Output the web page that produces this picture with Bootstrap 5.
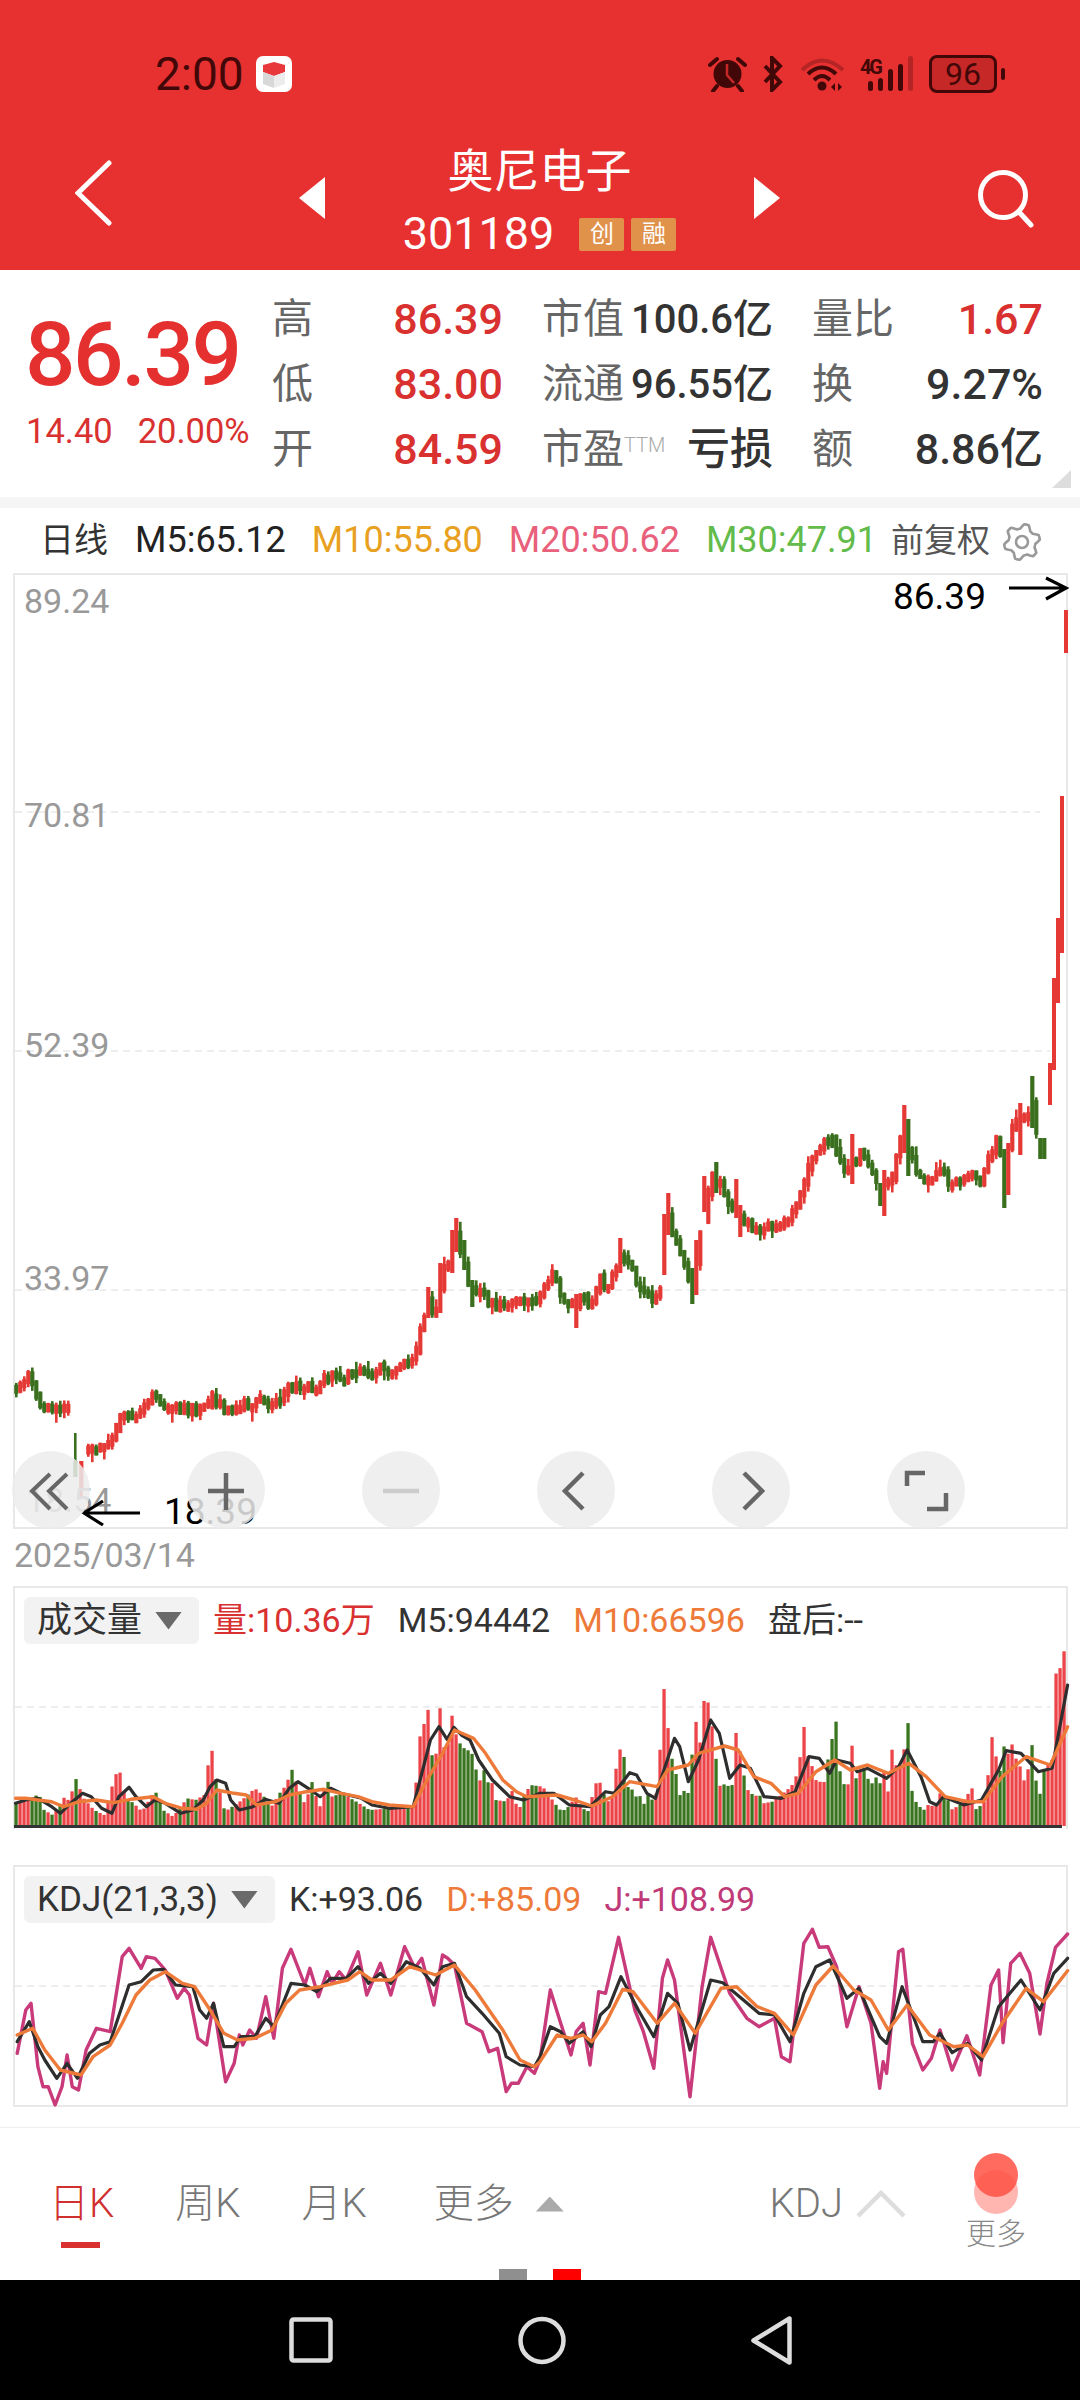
<!DOCTYPE html>
<html lang="zh">
<head>
<meta charset="utf-8">
<title>奥尼电子</title>
<link href="https://cdn.jsdelivr.net/npm/bootstrap@5.3.0/dist/css/bootstrap.min.css" rel="stylesheet">
<style>
html,body{margin:0;background:#fff}
body{width:1080px;height:2400px;overflow:hidden;font-family:Roboto,"Noto Sans CJK SC",sans-serif;color:#333}
.hdr{background:#e73131;height:270px;color:#fff}
.stat{height:40px;position:relative;top:54px;padding-left:155px;padding-right:75px;color:#420808}
.stat-time{font-size:46px;line-height:40px}
.stat svg{display:block}
.appicon{margin-left:12px}
.batt{width:68px;height:38px;margin-left:16px;border:3px solid #420808;border-radius:8px;background:#c62828;font-size:32px;line-height:32px;text-align:center;color:#420808}
.nub{width:4px;height:12px;margin-left:4px;border-radius:2px;background:#420808}
.navrow{padding-top:107px;height:257px;padding-left:75px}
.ttl{width:429px;line-height:1;text-align:center}
.ttl-name{font-size:46px;line-height:48px;height:48px}
.ttl-code{font-size:45px;line-height:46px;margin-top:16px}
.tag{width:45px;height:33px;background:#e0914a;font-size:24px;line-height:33px;border-radius:2px;text-align:center;color:#fff}
.quote{height:227px;padding:16px 0 0 25px;position:relative}
.q-left{width:247px;padding-top:24px}
.big{font-size:89px;line-height:90px;font-weight:500;color:#e53030;letter-spacing:-2.5px}
.sub{font-size:34.5px;line-height:40px;color:#d93030;margin-top:11px;gap:25px;padding-left:1px}
.q-grid{display:grid;grid-template-columns:repeat(3,231px);grid-auto-rows:65px;column-gap:39px;padding-top:1px}
.q-cell{line-height:65px}
.q-l{font-size:41px;color:#666}
.q-v{font-size:43px;font-weight:500;color:#333}
.q-w{font-size:40px}
.q-r{font-size:43px;font-weight:500;color:#d93030}
.ttm{font-size:20px;color:#aaa;position:relative;top:-11px;font-weight:300}
.q-corner{position:absolute;left:1052px;top:200px;width:19px;height:18px;background:#ddd;clip-path:polygon(100% 0,100% 100%,0 100%)}
.band{height:11px;background:#f5f5f5}
.maline{height:65px;padding-left:40px;font-size:36px;line-height:65px}
.c-o{color:#e8a020}.c-p{color:#e8607a}.c-g{color:#63bb4b}
.box{margin-left:13px;width:1055px;border:2px solid #e8e8e8;position:relative}
.box svg{display:block;overflow:visible}
.mainbox{height:956px}
.ctrls{position:absolute;left:-3px;top:876px;gap:97px}
.ctrl{width:78px;height:78px;padding:0;border:0;border-radius:50%;background:rgba(236,236,236,.85)}
.ctrl svg{display:block}
.daterow{height:57px;padding-left:14px;font-size:34px;line-height:52px;color:#999;position:relative}
.fade{position:absolute;left:890px;top:0;width:177px;height:36px;background:linear-gradient(#f1f1f1,#fff)}
.volbox{height:243px;border-bottom:0}
.kdjbox{height:242px;margin-top:36px}
.lg{padding:9px 0 0 9px;height:62px;font-size:34px;gap:23px;line-height:47px}
.kdjbox .lg{height:56px}
.pill{background:#f2f2f2;border-radius:6px;height:47px;padding:0 17px 0 13px;gap:13px;margin-right:-9px;font-size:35px;color:#333}
.tri{width:27px;height:18px;background:#6a6a6a;clip-path:polygon(0 0,100% 0,50% 100%)}
.c-r{color:#d93030}.c-a{color:#ee7a3a}.c-j{color:#c03a78}
.tabs{margin-top:20px;border-top:1px solid #eee;height:142px;padding:25px 54px 0 49px;gap:61px;color:#777;font-size:40px;font-weight:300}
.tab{margin-top:31px;line-height:40px}
.tab-on{color:#d03030}
.ubar{width:39px;height:6px;background:#d93030;margin:18px 0 0 12px}
.uptri{width:28px;height:15px;background:#aaa;clip-path:polygon(50% 0,100% 100%,0 100%);margin-left:22px}
.dotcol{width:60px;font-size:30px;line-height:30px;color:#888;text-align:center}
.dot1,.dot2{width:44px;height:44px;border-radius:50%;margin:0 auto}
.dot1{background:#ff6b5f}
.dot2{background:rgba(255,80,70,.42);margin-top:-27px}
.dotname{margin-top:5px}
.pager{height:11px;gap:26px}
.pager i{display:block;width:28px;height:11px;background:#8f8f8f}
.pager i+i{background:#f00}
.sysnav{height:120px;background:#000}
</style>
</head>
<body>
<div class="hdr">
  <div class="stat d-flex align-items-center">
    <span class="stat-time">2:00</span>
    <svg class="appicon" width="36" height="36" viewBox="0 0 36 36"><rect width="36" height="36" rx="7" fill="#fff"/><path d="M7 9l11-3 11 3v7l-11 4-11-4z" fill="#e8383c"/><path d="M7 16l11 4v12l-11-4z" fill="#d8d8d8"/><path d="M29 16l-11 4v12l11-4z" fill="#ececec"/></svg>
    <div class="ms-auto d-flex align-items-center">
      <svg width="39" height="36" viewBox="0 0 39 36"><circle cx="19.5" cy="18" r="14" fill="#420808"/><path d="M19 8v11l7 8" stroke="#c62828" stroke-width="2.5" fill="none"/><path d="M2 9l7-6M30 3l7 6M9 30l-4 5M30 30l4 5" stroke="#420808" stroke-width="4" stroke-linecap="round"/></svg>
      <svg style="margin-left:15px" width="21" height="36" viewBox="0 0 21 36"><path d="M3 10l15 16-8 8V2l8 8L3 26" stroke="#420808" stroke-width="4" fill="none"/></svg>
      <svg style="margin-left:17px" width="45" height="36" viewBox="0 0 45 36"><path d="M2 14Q22-5 43 14" stroke="#b52525" stroke-width="4" fill="none"/><path d="M8 18Q22 5 36 18M14 24Q22 16 30 24" stroke="#420808" stroke-width="4" fill="none"/><circle cx="22" cy="30" r="4.5" fill="#420808"/><path d="M31 31l4-4v8zM42 31l-4-4v8z" fill="#420808"/></svg>
      <svg style="margin-left:15px" width="53" height="36" viewBox="0 0 53 36"><text x="0" y="18" font-size="20" font-weight="700" fill="#420808" font-family="Roboto,sans-serif" textLength="23">4G</text><g fill="#420808"><rect x="8" y="25" width="5" height="10" rx="2.5"/><rect x="18" y="22" width="5" height="13" rx="2.5"/><rect x="28" y="13" width="5" height="22" rx="2.5"/><rect x="38" y="8" width="5" height="27" rx="2.5"/></g><rect x="48" y="0" width="5" height="35" rx="2.5" fill="#b52525"/></svg>
      <div class="batt">96</div><div class="nub"></div>
    </div>
  </div>
  <div class="navrow d-flex align-items-start">
    <svg style="margin-top:13px" width="40" height="66" viewBox="0 0 40 66"><path d="M34 3L3 33l31 30" stroke="#fff" stroke-width="5" fill="none" stroke-linecap="round"/></svg>
    <svg style="margin:30px 0 0 184px" width="26" height="42" viewBox="0 0 26 42"><path d="M26 0v42L0 21z" fill="#fff"/></svg>
    <div class="ttl">
      <div class="ttl-name">奥尼电子</div>
      <div class="ttl-code d-flex justify-content-center align-items-center"><span>301189</span><span class="tag" style="margin-left:25px">创</span><span class="tag" style="margin-left:7px">融</span></div>
    </div>
    <svg style="margin-top:30px" width="26" height="42" viewBox="0 0 26 42"><path d="M0 0v42l26-21z" fill="#fff"/></svg>
    <svg style="margin:23px 0 0 198px" width="56" height="58" viewBox="0 0 56 58"><circle cx="25" cy="25" r="22.5" stroke="#fff" stroke-width="5" fill="none"/><path d="M41 42l12 13" stroke="#fff" stroke-width="5" stroke-linecap="round"/></svg>
  </div>
</div>

<div class="quote d-flex">
  <div class="q-left">
    <div class="big">86.39</div>
    <div class="sub d-flex"><span>14.40</span><span>20.00%</span></div>
  </div>
  <div class="q-grid">
    <div class="q-cell d-flex justify-content-between"><span class="q-l">高</span><span class="q-r">86.39</span></div>
    <div class="q-cell d-flex justify-content-between"><span class="q-l">市值</span><span class="q-v q-w">100.6亿</span></div>
    <div class="q-cell d-flex justify-content-between"><span class="q-l">量比</span><span class="q-r">1.67</span></div>
    <div class="q-cell d-flex justify-content-between"><span class="q-l">低</span><span class="q-r">83.00</span></div>
    <div class="q-cell d-flex justify-content-between"><span class="q-l">流通</span><span class="q-v q-w">96.55亿</span></div>
    <div class="q-cell d-flex justify-content-between"><span class="q-l">换</span><span class="q-v">9.27%</span></div>
    <div class="q-cell d-flex justify-content-between"><span class="q-l">开</span><span class="q-r">84.59</span></div>
    <div class="q-cell d-flex justify-content-between"><span class="q-l">市盈<span class="ttm">TTM</span></span><span class="q-v">亏损</span></div>
    <div class="q-cell d-flex justify-content-between"><span class="q-l">额</span><span class="q-v">8.86亿</span></div>
  </div>
  <div class="q-corner"></div>
</div>
<div class="band"></div>

<div class="maline d-flex">
  <span style="font-size:34px">日线</span>
  <span style="margin-left:27px;color:#222">M5:65.12</span>
  <span class="c-o" style="margin-left:26px">M10:55.80</span>
  <span class="c-p" style="margin-left:26px">M20:50.62</span>
  <span class="c-g" style="margin-left:26px">M30:47.91</span>
  <span style="margin-left:14px;font-size:33px;color:#555">前复权</span>
  <svg style="margin:14px 0 0 12px" width="40" height="40" viewBox="0 0 40 40"><path id="gear" fill="none" stroke="#999" stroke-width="2.6" stroke-linejoin="round"/><circle cx="20" cy="20" r="6" fill="none" stroke="#999" stroke-width="2.6"/></svg>
</div>

<div class="box mainbox">
  <svg id="main" width="1051" height="952" viewBox="15 575 1051 952">
    <g stroke="#ddd" stroke-width="1" stroke-dasharray="7 5"><path d="M15 812H1040M15 1051H1050M15 1290H1066"/></g>
    <g id="candles"></g>
    <g font-family="Roboto,sans-serif" font-size="34" fill="#999">
      <text x="24" y="613">89.24</text><text x="24" y="827">70.81</text><text x="24" y="1057">52.39</text><text x="24" y="1290">33.97</text><text x="26" y="1512">18.54</text>
    </g>
    <g font-family="Roboto,sans-serif" font-size="37" fill="#000">
      <text x="893" y="609">86.39</text><text x="164" y="1524">18.39</text>
    </g>
    <path d="M1009 588H1066M1046 578l20 10-20 11M140 1513H84M103 1501l-19 12 19 12" stroke="#000" stroke-width="3.2" fill="none"/>
  </svg>
  <div class="ctrls d-flex">
    <button type="button" class="ctrl" aria-label="first"><svg width="78" height="78" viewBox="0 0 78 78"><path d="M38 23L20 40l18 18M55 23L37 40l18 18" stroke="#666" stroke-width="4" fill="none"/></svg></button>
    <button type="button" class="ctrl" aria-label="zoom in"><svg width="78" height="78" viewBox="0 0 78 78"><path d="M39 22v37M21 40h36" stroke="#666" stroke-width="4.5"/></svg></button>
    <button type="button" class="ctrl" aria-label="zoom out"><svg width="78" height="78" viewBox="0 0 78 78"><path d="M21 40h36" stroke="#ccc" stroke-width="4.5"/></svg></button>
    <button type="button" class="ctrl" aria-label="back"><svg width="78" height="78" viewBox="0 0 78 78"><path d="M46 22L28 40l18 18" stroke="#666" stroke-width="4.5" fill="none"/></svg></button>
    <button type="button" class="ctrl" aria-label="forward"><svg width="78" height="78" viewBox="0 0 78 78"><path d="M32 22l18 18-18 18" stroke="#666" stroke-width="4.5" fill="none"/></svg></button>
    <button type="button" class="ctrl" aria-label="fullscreen"><svg width="78" height="78" viewBox="0 0 78 78"><path d="M20 35V22h18M59 42v16H40" stroke="#666" stroke-width="4.5" fill="none"/></svg></button>
  </div>
</div>

<div class="daterow">2025/03/14<div class="fade"></div></div>

<div class="box volbox">
  <div class="lg d-flex">
    <div class="pill d-flex align-items-center"><span>成交量</span><span class="tri"></span></div>
    <span class="c-r">量:10.36万</span>
    <span>M5:94442</span>
    <span class="c-a">M10:66596</span>
    <span>盘后:--</span>
  </div>
  <svg id="vol" width="1051" height="179" viewBox="15 1650 1051 179"></svg>
</div>

<div class="box kdjbox">
  <div class="lg d-flex">
    <div class="pill d-flex align-items-center"><span>KDJ(21,3,3)</span><span class="tri"></span></div>
    <span>K:+93.06</span>
    <span class="c-a">D:+85.09</span>
    <span class="c-j">J:+108.99</span>
  </div>
  <svg id="kdj" width="1051" height="182" viewBox="15 1923 1051 182"></svg>
</div>

<div class="tabs d-flex align-items-start">
  <div class="tab tab-on">日K<div class="ubar"></div></div>
  <div class="tab">周K</div>
  <div class="tab">月K</div>
  <div class="tab d-flex align-items-center" style="margin-left:6px">更多<span class="uptri"></span></div>
  <div class="tab d-flex align-items-center ms-auto" style="margin-right:-1px">KDJ<svg style="margin-left:13px" width="50" height="28" viewBox="0 0 50 28"><path d="M2 26L25 3l23 23" stroke="#ddd" stroke-width="4.5" fill="none"/></svg></div>
  <div class="dotcol"><div class="dot1"></div><div class="dot2"></div><div class="dotname">更多</div></div>
</div>
<div class="pager d-flex justify-content-center"><i></i><i></i></div>

<div class="sysnav d-flex justify-content-center align-items-center" style="gap:185px">
  <svg width="44" height="46" viewBox="0 0 44 46"><rect x="2.5" y="2.5" width="39" height="41" rx="2" stroke="#ddd" stroke-width="4.5" fill="none"/></svg>
  <svg width="48" height="49" viewBox="0 0 48 49"><circle cx="24" cy="24.5" r="21.5" stroke="#ddd" stroke-width="4.5" fill="none"/></svg>
  <svg width="41" height="49" viewBox="0 0 41 49"><path d="M38.5 2.5v44L2.5 24.5z" stroke="#ddd" stroke-width="4.5" fill="none" stroke-linejoin="round"/></svg>
</div>

<script>
(function(){
var NS='http://www.w3.org/2000/svg';
function pts(s,xf,yf){return s.trim().split(/\s+/).map(function(t){var a=t.split(',');return [xf(+a[0]),yf(+a[1])];});}
function L(x){return x/2.904;} function R(x){return 540+x/2.9;}
function interp(p,x){ if(x<=p[0][0])return p[0][1]; for(var i=1;i<p.length;i++){ if(x<=p[i][0]){var a=p[i-1],b=p[i];return a[1]+(b[1]-a[1])*(x-a[0])/(b[0]-a[0]);}} return p[p.length-1][1];}
var seed=12345; function rnd(){seed=(seed*1103515+12345)&0x7fffffff;return (seed>>>8)%1000/1000;}
function el(n,a){var e=document.createElementNS(NS,n);for(var k in a)e.setAttribute(k,a[k]);return e;}

/* gear */
var g='';for(var i=0;i<48;i++){var t=i/48*Math.PI*2,ph=(i%8);var r=(ph<3)?18:(ph==3||ph==7)?15.5:13.5;g+=(i?'L':'M')+(20+r*Math.sin(t+.13)).toFixed(1)+' '+(20-r*Math.cos(t+.13)).toFixed(1);}
document.getElementById('gear').setAttribute('d',g+'Z');

var vy=function(v){return 1580+v/3;}, ky=function(v){return 1860+v/3;};
var volL=pts("45,670 85,660 110,640 125,690 150,705 185,650 200,665 215,590 240,655 270,690 300,705 330,590 343,565 360,650 385,670 410,695 447,630 470,690 500,710 540,655 565,660 590,645 610,485 620,585 632,620 650,695 700,660 737,625 760,645 785,680 815,630 830,615 842,560 855,600 885,680 900,595 925,685 946,590 960,650 990,640 1040,670 1070,690 1130,685 1200,680 1215,470 1225,465 1237,348 1248,500 1260,585 1272,348 1283,490 1295,530 1306,388 1320,460 1335,495 1350,510 1365,512 1376,550 1388,615 1400,560 1412,610 1423,595 1436,660 1470,665 1480,620 1492,660 1503,695 1515,655 1537,615",L,vy);
var volR=pts("5,620 40,670 60,695 80,680 100,650 120,685 140,695 155,612 170,605 180,635 190,665 205,660 225,510 238,505 250,620 262,625 275,650 285,640 295,680 310,645 330,668 343,568 353,288 365,415 378,530 390,570 400,650 413,630 425,650 435,565 447,395 458,530 470,365 482,355 493,415 505,515 517,618 540,610 552,650 563,448 575,500 587,580 600,630 620,650 632,640 645,670 670,665 690,650 725,620 737,600 750,543 761,427 773,525 785,555 797,600 820,610 832,540 855,418 866,570 878,610 888,645 900,478 912,598 925,570 937,565 947,595 960,610 970,590 983,610 994,570 1005,650 1017,505 1028,555 1040,560 1052,515 1063,405 1075,630 1087,665 1098,680 1110,690 1122,675 1145,680 1157,640 1168,655 1180,660 1192,688 1215,675 1250,625 1262,690 1285,665 1295,602 1306,462 1318,522 1330,580 1342,498 1354,522 1365,490 1377,535 1388,555 1400,603 1412,570 1423,487 1435,600 1447,642 1458,570 1470,550 1482,540 1492,282 1504,270 1516,210 1527,272",R,vy);
var vt=volL.concat(volR);

/* price path */
var price=[[15,1387],[26,1375],[38,1403],[58,1412],[69,1407],[88,1450],[103,1447],[114,1433],[120,1412],[138,1417],[151,1397],[172,1408],[200,1410],[210,1397],[224,1410],[255,1402],[275,1402],[286,1388],[310,1388],[318,1388],[327,1375],[344,1377],[358,1371],[368,1375],[379,1368],[393,1372],[403,1360],[413,1360],[419,1333],[427,1303],[434,1317],[440,1280],[448,1258],[455,1237],[461,1257],[468,1287],[479,1287],[489,1303],[506,1308],[525,1297],[537,1303],[550,1275],[561,1298],[574,1306],[581,1295],[590,1310],[599,1279],[606,1291],[618,1256],[626,1264],[640,1287],[654,1302],[659,1287],[666,1214],[674,1241],[690,1287],[694,1268],[702,1218],[709,1176],[719,1187],[728,1210],[735,1203],[740,1222],[759,1233],[774,1224],[790,1218],[797,1195],[807,1168],[819,1149],[826,1142],[833,1145],[845,1176],[850,1161],[862,1153],[880,1191],[892,1172],[902,1126],[906,1149],[921,1182],[940,1168],[950,1188],[962,1176],[970,1168],[978,1182],[988,1161],[997,1138],[1004,1172],[1011,1126],[1023,1119],[1030,1103],[1038,1145],[1045,1107]];
var RED='#e53935',GRN='#3a6f1e';
var ovr={};
[[574,1294,1328,1],[618,1238,1273,1],[666,1193,1235,1],[662,1214,1275,1],[690,1268,1304,0],[694,1240,1295,1],[702,1176,1212,1],[714,1162,1193,0],[738,1205,1237,1],[734,1179,1218,1],[882,1170,1216,1],[902,1105,1153,1],[906,1119,1176,0],[1002,1149,1208,0],[1006,1143,1195,1],[1030,1076,1128,0],[1018,1103,1155,1],[850,1134,1184,1],[878,1183,1206,0],[426,1287,1318,1],[438,1263,1313,1],[454,1218,1252,1],[470,1280,1307,0],[450,1230,1273,1],[462,1240,1270,0],[1038,1138,1159,0],[1042,1138,1159,0],[1046,1090,1125,1]].forEach(function(a){var s=15+Math.round((a[0]-15)/4)*4;ovr[s]=a;});
var cg=document.getElementById('candles'),colors={};
function candle(x,top,bot,wt,wb,c){
  cg.appendChild(el('rect',{x:x,y:wt,width:2.6,height:wb-wt,fill:c}));
  cg.appendChild(el('rect',{x:x-.8,y:top,width:4.2,height:bot-top,fill:c}));
}
var prev=interp(price,15);
for(var x=15;x<=1046;x+=4){
  if(x>=71&&x<=83){prev=interp(price,88);continue;}
  var y=interp(price,x)+(rnd()-.5)*9;
  if(ovr[x]){var o=ovr[x];colors[x]=o[3]?RED:GRN;candle(x,o[1],o[2],o[1],o[2],colors[x]);prev=y;continue;}
  var vh=1826-interp(vt,x);
  var up=y<prev-.5||(Math.abs(y-prev)<1.5&&rnd()>.5);
  var top=Math.min(y,prev)-1-rnd()*2-rnd()*vh*.05, bot=Math.max(y,prev)+1+rnd()*2+rnd()*vh*.05;
  if(bot-top<9){bot=top+9;}
  var wt=top-rnd()*rnd()*10, wb=bot+rnd()*rnd()*10;
  var c=up?RED:GRN; colors[x]=c;
  candle(x,top,bot,wt,wb,c);
  prev=y;
}
candle(74,1461,1477,1433,1477,GRN);colors[75]=GRN;
candle(80,1461,1490,1461,1497,RED);colors[79]=RED;
[[1048,1063,1105],[1052,978,1070],[1056,918,1003],[1060,796,953]].forEach(function(a){colors[a[0]]=RED;cg.appendChild(el('rect',{x:a[0],y:a[1],width:4,height:a[2]-a[1],fill:RED}));});
cg.appendChild(el('rect',{x:1064,y:610,width:4,height:43,fill:RED}));

/* volume */
var vs=document.getElementById('vol');
vs.appendChild(el('path',{d:'M15 1707H1050',stroke:'#ddd','stroke-width':1,'stroke-dasharray':'7 5'}));
var VR='#ec4448',VG='#3a7520';
for(var x2=15;x2<=1064;x2+=4){
  var col=colors[x2]||colors[x2+1]||colors[x2-1]; 
  vs.appendChild(el('rect',{x:x2-.6,y:interp(vt,x2),width:3.3,height:1826-interp(vt,x2),fill:(col===GRN)?VG:VR}));
}
vs.appendChild(el('rect',{x:14,y:1825,width:1048,height:3,fill:'#333'}));
function poly(svg,p,c,w){svg.appendChild(el('polyline',{points:p.map(function(a){return a[0].toFixed(1)+','+a[1].toFixed(1);}).join(' '),fill:'none',stroke:c,'stroke-width':w,'stroke-linejoin':'round','stroke-linecap':'round'}));}
var k5=pts("45,670 75,660 110,655 150,680 175,700 205,670 240,640 265,650 295,685 325,700 345,650 375,622 395,650 425,680 450,660 480,670 525,700 560,690 590,660 610,620 630,600 655,610 670,660 695,690 735,680 770,658 810,670 840,625 865,605 895,625 930,650 960,625 990,640 1050,655 1080,675 1130,685 1200,680 1225,580 1250,480 1275,440 1298,478 1318,442 1340,465 1365,480 1390,540 1430,600 1480,650 1520,660",L,vy)
 .concat(pts("0,640 40,640 85,675 145,680 190,635 215,640 260,578 280,585 310,640 335,655 350,600 390,475 405,500 430,605 460,540 495,420 520,460 550,595 580,555 610,565 650,650 700,655 740,635 780,530 810,535 840,580 860,540 900,550 920,575 950,565 1005,595 1040,560 1065,510 1105,590 1130,665 1150,675 1170,650 1230,675 1280,660 1330,570 1352,512 1395,520 1445,575 1485,565 1530,315",R,vy));
var k10=pts("45,655 75,655 110,660 150,665 185,680 230,665 280,660 330,668 380,658 445,650 480,670 530,685 570,688 600,670 630,630 680,640 715,645 745,675 800,665 840,645 880,637 940,628 990,640 1040,650 1080,665 1130,675 1200,680 1240,600 1285,520 1320,450 1375,475 1410,520 1460,600 1500,635 1530,650",L,vy)
 .concat(pts("0,648 50,645 100,660 150,678 210,650 260,605 340,620 370,570 430,555 460,520 535,498 575,510 620,590 670,610 710,650 750,640 800,575 855,540 900,570 950,555 1010,580 1070,550 1120,590 1175,650 1240,665 1285,665 1340,590 1410,530 1480,555 1530,440",R,vy));
poly(vs,k5,'#2e2e2e',3.2);poly(vs,k10,'#ee7a3a',3.4);

/* KDJ */
var ks=document.getElementById('kdj');
ks.appendChild(el('path',{d:'M15 1986H1066',stroke:'#ddd','stroke-width':1,'stroke-dasharray':'7 5'}));
var J=pts("50,580 75,450 90,430 110,620 125,680 140,680 160,735 180,680 195,585 210,680 228,690 250,570 280,505 320,515 355,290 375,265 410,325 425,290 450,295 480,330 515,415 535,385 550,405 575,535 600,555 620,430 655,665 680,610 695,525 705,555 725,510 745,535 772,410 795,535 820,325 845,268 885,375 900,325 925,410 950,335 965,370 985,335 1005,360 1040,275 1065,405 1105,310 1135,405 1175,260 1205,325 1225,295 1260,435 1285,285 1300,295 1320,315 1355,490 1400,515 1420,575 1445,565 1470,695 1485,670 1505,670 1530,620 1552,640",L,ky)
 .concat(pts("0,600 30,390 60,490 90,585 105,515 125,490 145,615 170,395 190,400 228,232 275,450 300,515 330,625 355,355 370,300 390,360 435,710 470,380 495,232 530,340 550,400 600,475 635,500 680,475 700,590 725,605 765,250 790,208 810,262 835,260 860,320 890,500 925,380 960,490 985,685 995,605 1005,640 1040,275 1052,268 1080,550 1110,630 1135,595 1160,510 1195,630 1238,527 1275,645 1308,375 1330,330 1343,548 1365,310 1392,280 1420,340 1450,522 1470,370 1495,262 1530,222",R,ky));
var K=pts("50,545 85,485 110,560 130,600 165,655 195,610 225,655 260,580 290,555 320,545 375,375 410,365 445,330 475,328 510,375 560,380 580,450 600,475 620,430 650,560 680,560 700,530 740,530 772,475 795,500 845,370 885,375 920,395 960,355 1005,355 1040,320 1070,370 1105,340 1135,370 1180,305 1220,325 1260,375 1285,320 1320,310 1355,410 1400,460 1450,520 1470,590 1510,615 1552,620",L,ky)
 .concat(pts("0,590 30,500 60,515 85,550 125,515 148,560 175,465 200,440 235,350 285,450 330,530 370,400 400,430 435,570 495,360 530,368 590,420 635,460 680,465 725,545 765,400 800,320 840,300 890,415 925,385 985,530 1005,550 1050,380 1110,545 1140,545 1160,520 1195,578 1240,550 1280,600 1330,440 1395,360 1450,450 1490,340 1530,295",R,ky));
var D=pts("50,525 95,505 130,570 175,630 235,645 270,590 320,555 355,490 395,405 435,360 480,335 530,370 565,380 610,450 650,520 690,540 740,535 790,510 830,430 870,390 930,380 1010,360 1045,335 1080,360 1135,360 1190,320 1265,345 1320,315 1380,390 1460,510 1510,600 1552,620",L,ky)
 .concat(pts("0,605 50,525 90,535 125,525 150,545 190,490 240,388 270,395 340,490 390,430 450,520 525,385 570,380 630,440 680,460 735,525 800,375 850,318 910,390 960,420 1010,510 1065,435 1130,525 1200,560 1240,555 1285,590 1340,490 1410,385 1460,425 1530,332",R,ky));
poly(ks,J,'#c93a7b',3.4);poly(ks,K,'#2e2e2e',3.2);poly(ks,D,'#ee7a3a',3.4);
})();
</script>
<script src="https://cdn.jsdelivr.net/npm/bootstrap@5.3.0/dist/js/bootstrap.bundle.min.js"></script>
</body>
</html>
